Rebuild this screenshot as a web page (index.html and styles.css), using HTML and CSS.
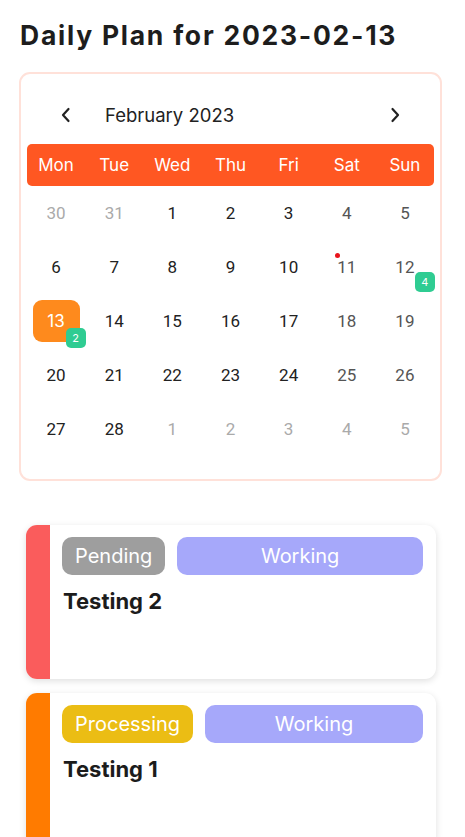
FILE: index.html
```html
<!DOCTYPE html>
<html>
<head>
<meta charset="utf-8">
<link rel="stylesheet" href="styles.css">
</head>
<body>
<div class="page">
  <h1 class="title">Daily Plan for 2023-02-13</h1>
  <div class="calendar">
    <div class="cal-head">
      <span class="chev"><svg width="12" height="16" viewBox="0 0 12 16"><path d="M8.5 2 L3 8 L8.5 14" fill="none" stroke="#222" stroke-width="2.2" stroke-linecap="round" stroke-linejoin="round"/></svg></span>
      <span class="month">February 2023</span>
      <span class="chev right"><svg width="12" height="16" viewBox="0 0 12 16"><path d="M3.5 2 L9 8 L3.5 14" fill="none" stroke="#222" stroke-width="2.2" stroke-linecap="round" stroke-linejoin="round"/></svg></span>
    </div>
    <div class="weekdays">
      <span>Mon</span><span>Tue</span><span>Wed</span><span>Thu</span><span>Fri</span><span>Sat</span><span>Sun</span>
    </div>
    <div class="days">
      <div class="day other">30</div><div class="day other">31</div><div class="day">1</div><div class="day">2</div><div class="day">3</div><div class="day we">4</div><div class="day we">5</div>
      <div class="day">6</div><div class="day">7</div><div class="day">8</div><div class="day">9</div><div class="day">10</div><div class="day we"><span class="num">11<i class="dot"></i></span></div><div class="day we"><span class="num">12</span><b class="count c12">4</b></div>
      <div class="day today"><span class="sel">13<b class="count c13">2</b></span></div><div class="day">14</div><div class="day">15</div><div class="day">16</div><div class="day">17</div><div class="day we">18</div><div class="day we">19</div>
      <div class="day">20</div><div class="day">21</div><div class="day">22</div><div class="day">23</div><div class="day">24</div><div class="day we">25</div><div class="day we">26</div>
      <div class="day">27</div><div class="day">28</div><div class="day other">1</div><div class="day other">2</div><div class="day other">3</div><div class="day other">4</div><div class="day other">5</div>
    </div>
  </div>
  <div class="tasks">
    <div class="card">
      <div class="bar red"></div>
      <div class="card-body">
        <div class="tags"><span class="tag grey">Pending</span><span class="tag violet wide">Working</span></div>
        <div class="task-title">Testing 2</div>
      </div>
    </div>
    <div class="card">
      <div class="bar orange"></div>
      <div class="card-body">
        <div class="tags"><span class="tag yellow">Processing</span><span class="tag violet wide">Working</span></div>
        <div class="task-title">Testing 1</div>
      </div>
    </div>
  </div>
</div>
</body>
</html>
```

FILE: styles.css
```css
* { box-sizing: border-box; }
html, body { margin: 0; padding: 0; background: #fff; }
body { font-family: Inter, "Noto Sans", sans-serif; color: #1c1c1c; }
.page { padding: 18px 23px 0 19px; }
.title {
  margin: 0 0 0 1px;
  font-size: 26.5px;
  font-weight: 700;
  line-height: 34px;
  letter-spacing: 1.75px;
  color: #1d1d1d;
}
.calendar {
  margin-top: 20px;
  border: 2px solid #ffe1d9;
  border-radius: 11px;
  padding: 0 6px 23px;
}
.cal-head {
  display: flex;
  align-items: center;
  height: 40px;
  margin: 21px 0 9px;
  padding: 0 27px 0 27px;
}
.chev { width: 24px; height: 24px; display: flex; align-items: center; justify-content: center; }
.chev.right { margin-left: auto; }
.month { margin-left: 27px; font-size: 18.5px; color: #222; font-family: Inter, sans-serif; }
.weekdays {
  display: grid;
  grid-template-columns: repeat(7, 1fr);
  height: 42px;
  align-items: center;
  background: #ff5722;
  border-radius: 5px;
  color: #fff;
  font-size: 17px;
  text-align: center;
}
.days {
  display: grid;
  grid-template-columns: repeat(7, 1fr);
  grid-auto-rows: 54px;
  font-family: Roboto, sans-serif;
  font-size: 17px;
}
.day {
  display: flex;
  align-items: center;
  justify-content: center;
  position: relative;
  color: #222;
}
.day.we { color: #555; }
.day.other { color: #aaa; }
.num { position: relative; }
.dot {
  position: absolute;
  left: -2.5px;
  top: -4px;
  width: 5px;
  height: 5px;
  border-radius: 50%;
  background: #e8141c;
}
.sel {
  position: relative;
  width: 47px;
  height: 42px;
  border-radius: 9px;
  background: #fe8a1d;
  color: #fff;
  display: flex;
  align-items: center;
  justify-content: center;
  font-family: Inter, sans-serif;
}
.count {
  position: absolute;
  width: 20px;
  height: 20px;
  border-radius: 5px;
  background: #2fcc92;
  color: #fff;
  font-size: 11px;
  font-weight: 400;
  font-family: Inter, sans-serif;
  display: flex;
  align-items: center;
  justify-content: center;
}
.c13 { left: 33px; top: 28px; }
.c12 { left: 39px; top: 32px; }
.tasks {
  margin: 44px 6px 0 7px;
  display: flex;
  flex-direction: column;
  gap: 14px;
}
.card {
  display: flex;
  height: 154px;
  border-radius: 11px;
  background: #fff;
  box-shadow: 0 2px 7px rgba(0,0,0,0.13);
  overflow: hidden;
}
.bar { width: 24px; flex: none; }
.bar.red { background: #fa5c5c; }
.bar.orange { background: #ff7b00; }
.card-body { flex: 1; padding: 12px 13px 0 12px; }
.tags { display: flex; gap: 12px; }
.tag {
  height: 38px;
  border-radius: 10px;
  color: #fff;
  font-size: 20px;
  display: flex;
  align-items: center;
  justify-content: center;
  padding: 0 13px;
}
.tag.wide { flex: 1; }
.grey { background: #9e9e9e; }
.yellow { background: #ebbd14; }
.violet { background: #a6a8fa; }
.task-title {
  margin-top: 13px;
  font-size: 22px;
  font-weight: 700;
  color: #1c1c1c;
  padding-left: 1px;
}
```
